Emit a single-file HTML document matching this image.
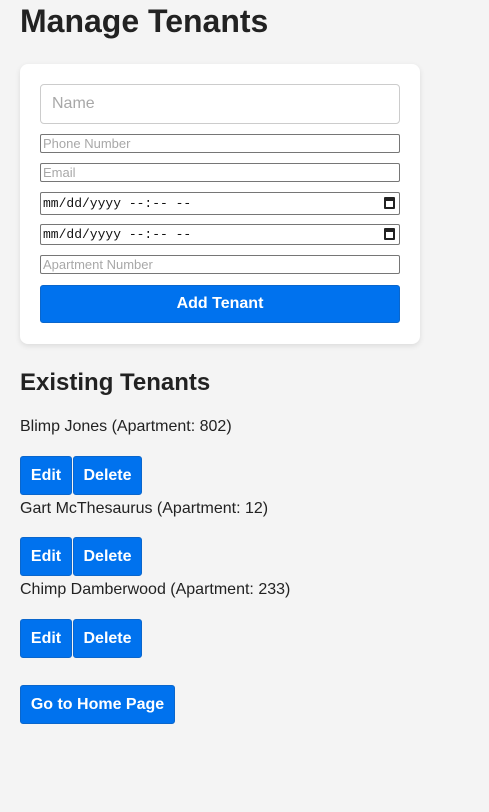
<!DOCTYPE html>
<html><head><style>
*{box-sizing:border-box;margin:0;padding:0}
body{width:489px;height:812px;background:#f4f4f4;font-family:"Liberation Sans",Arial,sans-serif;color:#222;position:relative;overflow:hidden}
.a{position:absolute}
h1{position:absolute;left:20px;top:3px;font-size:32px;font-weight:bold;color:#222}
.card{left:20px;top:64px;width:400px;height:280px;background:#fff;border-radius:8px;box-shadow:0 2px 6px rgba(0,0,0,0.1)}
.in{left:40px;width:360px;border:1px solid #767676;border-radius:2px;background:#fff;font-size:13px;color:#a8a8a8;padding-left:2px;line-height:17px}
.dt{left:40px;width:360px;border:1px solid #767676;border-radius:2px;background:#fff;font-family:"Liberation Mono","DejaVu Sans Mono",monospace;font-size:13px;color:#111;padding-left:2px}
.cal{position:absolute;right:4px;top:4px;width:11px;height:12px;border:2px solid #222;border-top-width:4px;border-radius:1px}
.btn{background:#0072ee;color:#fff;font-weight:bold;font-size:16px;border-radius:3px;text-align:center;border:1px solid #0a66cc}
.t{left:20px;font-size:16px;color:#222}
</style></head><body>
<h1>Manage Tenants</h1>
<div class="a card"></div>
<div class="a" style="left:40px;top:84px;width:360px;height:40px;border:1px solid #ccc;border-radius:4px;font-size:16px;color:#a8a8a8;padding:10px 0 0 11px">Name</div>
<div class="a in" style="top:134px;height:19px">Phone Number</div>
<div class="a in" style="top:163px;height:19px">Email</div>
<div class="a dt" style="top:192px;height:23px;line-height:21px">mm/dd/yyyy --:-- --<span class="cal"></span></div>
<div class="a dt" style="top:224px;height:21px;line-height:19px">mm/dd/yyyy --:-- --<span class="cal" style="top:3px"></span></div>
<div class="a in" style="top:255px;height:19px">Apartment Number</div>
<div class="a btn" style="left:40px;top:285px;width:360px;height:38px;line-height:36px">Add Tenant</div>
<div class="a" style="left:20px;top:369px;font-size:24px;font-weight:bold;color:#222">Existing Tenants</div>
<div class="a t" style="top:418px">Blimp Jones (Apartment: 802)</div>
<div class="a btn" style="left:20px;top:456px;width:52px;height:39px;line-height:37px">Edit</div>
<div class="a btn" style="left:73px;top:456px;width:69px;height:39px;line-height:37px">Delete</div>
<div class="a t" style="top:500px">Gart McThesaurus (Apartment: 12)</div>
<div class="a btn" style="left:20px;top:537px;width:52px;height:39px;line-height:37px">Edit</div>
<div class="a btn" style="left:73px;top:537px;width:69px;height:39px;line-height:37px">Delete</div>
<div class="a t" style="top:581px">Chimp Damberwood (Apartment: 233)</div>
<div class="a btn" style="left:20px;top:619px;width:52px;height:39px;line-height:37px">Edit</div>
<div class="a btn" style="left:73px;top:619px;width:69px;height:39px;line-height:37px">Delete</div>
<div class="a btn" style="left:20px;top:685px;width:155px;height:39px;line-height:37px">Go to Home Page</div>
</body></html>
